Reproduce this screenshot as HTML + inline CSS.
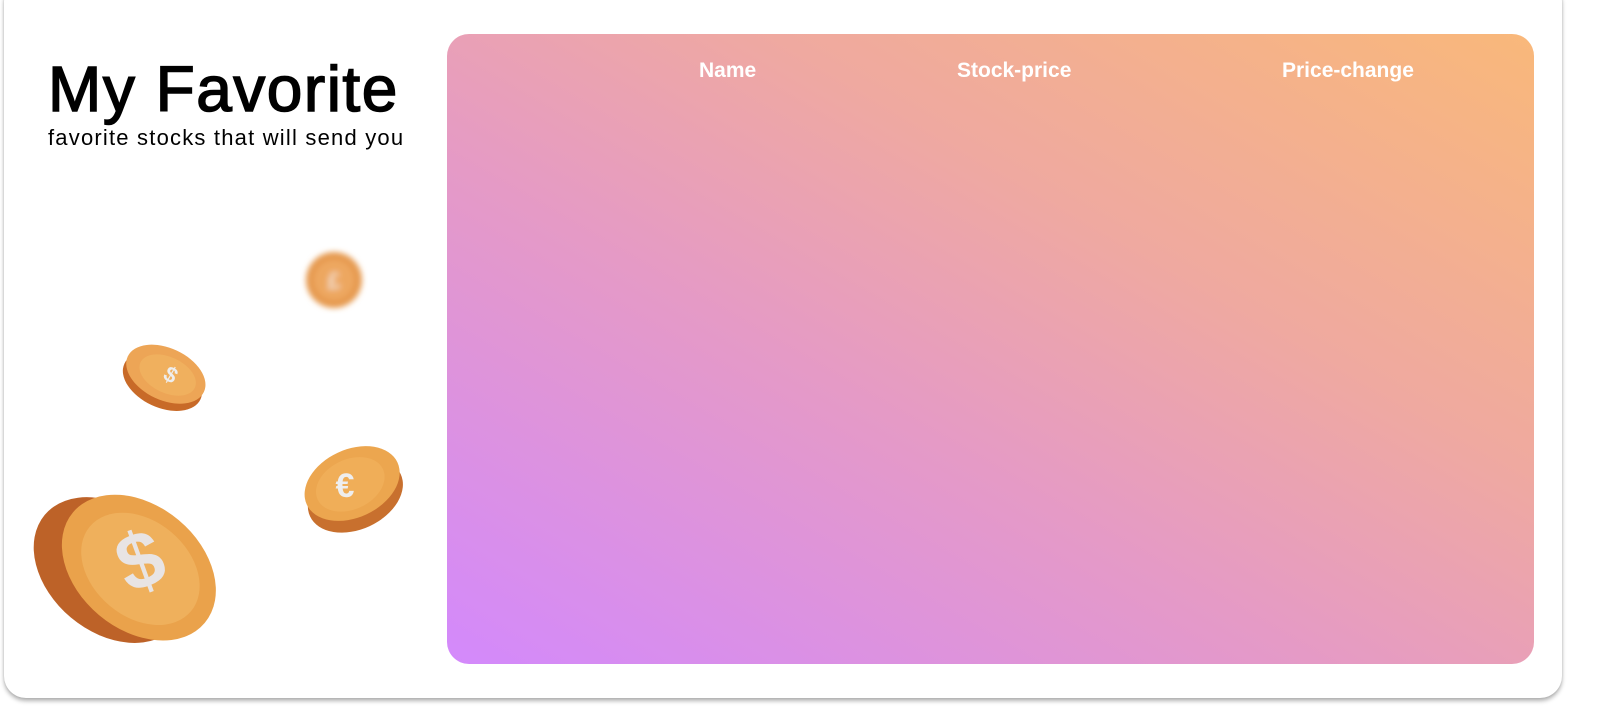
<!DOCTYPE html>
<html><head><style>
html,body{margin:0;padding:0;width:1597px;height:722px;background:#fff;overflow:hidden;font-family:"Liberation Sans",sans-serif}
.card{position:absolute;left:4px;top:-20px;width:1558px;height:718px;background:#fff;border-radius:22px;box-shadow:0 3px 4px rgba(0,0,0,0.3),0 0 2px rgba(0,0,0,0.1)}
h1{position:absolute;left:48px;top:52px;margin:0;font-size:64px;font-weight:normal;letter-spacing:1.5px;color:#000;-webkit-text-stroke:1.5px #000}
.sub{position:absolute;left:48px;top:125px;font-size:22px;letter-spacing:1.2px;color:#000}
.panel{position:absolute;left:447px;top:34px;width:1087px;height:630px;border-radius:22px;background:linear-gradient(30deg,#d389fc 0%,#e59ac6 40%,#efa9a0 65%,#f9b87a 100%)}
.h{position:absolute;top:59px;color:#fff;font-size:21px;font-weight:bold}
svg{position:absolute;left:0;top:0}
</style></head><body>
<div class="card"></div>
<h1>My Favorite</h1>
<div class="sub">favorite stocks that will send you</div>
<div class="panel"></div>
<div class="h" style="left:699px">Name</div>
<div class="h" style="left:957px">Stock-price</div>
<div class="h" style="left:1282px">Price-change</div>
<svg width="450" height="722">
<defs><filter id="b"><feGaussianBlur stdDeviation="3"/></filter></defs>
<g filter="url(#b)"><circle cx="334" cy="280" r="28" fill="#e69a4f"/><circle cx="334" cy="280" r="20" fill="#eda760"/><text x="334" y="289" font-size="24" fill="#f3d9c0" text-anchor="middle" font-weight="bold">£</text></g>
<g transform="rotate(25 165 376)"><ellipse cx="165" cy="382" rx="42" ry="26" fill="#c86a28"/><ellipse cx="165" cy="374" rx="42" ry="26" fill="#eda556"/><ellipse cx="167" cy="374" rx="30" ry="18" fill="#f0b05e"/></g>
<text x="170" y="382" font-size="22" fill="#eee" text-anchor="middle" font-weight="bold" transform="rotate(30 170 376)">$</text>
<g transform="rotate(-25 352 488)"><ellipse cx="352" cy="496" rx="50" ry="34" fill="#c8702e"/><ellipse cx="354" cy="484" rx="50" ry="34" fill="#eca64f"/><ellipse cx="352" cy="484" rx="36" ry="25" fill="#f0ae58"/></g>
<text x="345" y="497" font-size="34" fill="#eee" text-anchor="middle" font-weight="bold">€</text>
<g transform="rotate(40 128 565)"><ellipse cx="118" cy="580" rx="86" ry="62" fill="#bd6228"/><ellipse cx="138" cy="560" rx="86" ry="62" fill="#eaa24b"/><ellipse cx="140" cy="560" rx="66" ry="48" fill="#efb05c"/></g>
<text x="140" y="588" font-size="80" fill="#e8e4e4" text-anchor="middle" font-weight="bold" transform="rotate(-20 140 560)">$</text>
</svg>
</body></html>
